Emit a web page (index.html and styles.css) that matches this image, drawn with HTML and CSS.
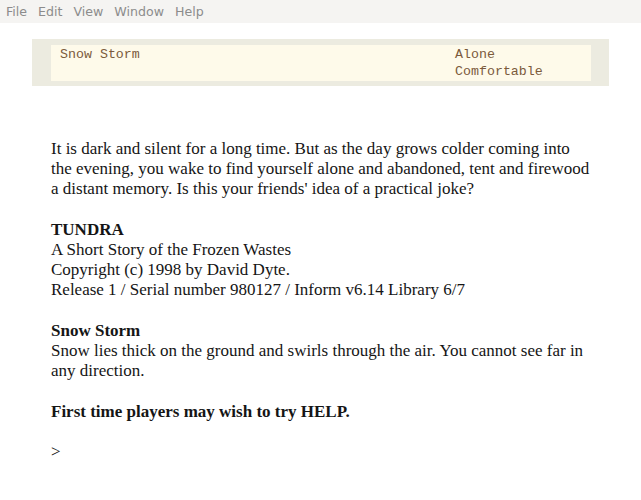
FILE: index.html
```html
<!DOCTYPE html>
<html lang="en">
<head>
    <meta charset="UTF-8">
    <title>Tundra</title>
    <link rel="stylesheet" href="styles.css">
</head>
<body>
    <div class="menubar">
        <span class="menu-item">File</span>
        <span class="menu-item">Edit</span>
        <span class="menu-item">View</span>
        <span class="menu-item">Window</span>
        <span class="menu-item">Help</span>
    </div>

    <div class="game">
        <div class="status">
            <div class="status-inner">
                <div class="status-left">Snow Storm</div>
                <div class="status-right">Alone<br>Comfortable</div>
            </div>
        </div>

        <div class="story">
            <p>It is dark and silent for a long time. But as the day grows colder coming into the evening, you wake to find yourself alone and abandoned, tent and firewood a distant memory. Is this your friends' idea of a practical joke?</p>
            <p><b>TUNDRA</b><br>
            A Short Story of the Frozen Wastes<br>
            Copyright (c) 1998 by David Dyte.<br>
            Release 1 / Serial number 980127 / Inform v6.14 Library 6/7</p>
            <p><b>Snow Storm</b><br>
            Snow lies thick on the ground and swirls through the air. You cannot see far in any direction.</p>
            <p><b>First time players may wish to try HELP.</b></p>
            <p class="prompt">&gt;</p>
        </div>
    </div>
</body>
</html>
```

FILE: styles.css
```css
body {
    margin: 0;
    background: #fff;
    font-family: "Liberation Serif", serif;
}
.menubar {
    height: 23px;
    background: #f5f4f2;
    display: flex;
    align-items: center;
    gap: 11px;
    padding-left: 6px;
    font-family: "DejaVu Sans", sans-serif;
    font-size: 12.6px;
    color: #8c8c8c;
}
.game {
    width: 577px;
    margin: 16px auto 0;
}
.status {
    background: #ecebe0;
    padding: 6px 18px 5px 19px;
}
.status-inner {
    background: #fefaea;
    display: flex;
    height: 35px;
    padding: 1px 8px 0 9px;
    font-family: "Liberation Mono", monospace;
    font-size: 13.3px;
    line-height: 17px;
    color: #7b5a3c;
}
.status-left {
    flex: 1;
}
.status-right {
    width: 128px;
}
.story {
    padding: 53px 19px 0;
    font-size: 17px;
    line-height: 20.2px;
    color: #151515;
}
.story p {
    margin: 0 0 20.2px;
}
```
